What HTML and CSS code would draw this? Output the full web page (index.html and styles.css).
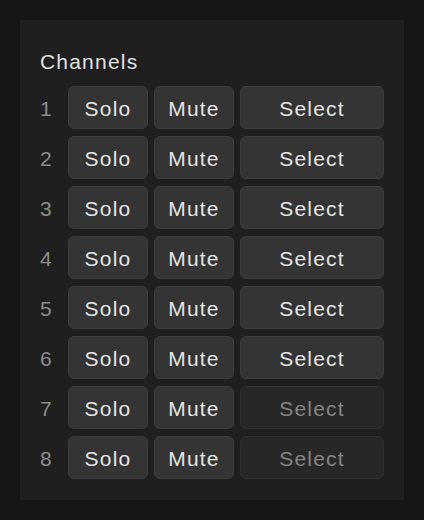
FILE: index.html
```html
<!DOCTYPE html>
<html lang="en">
<head>
<meta charset="utf-8">
<title>Channels</title>
<link rel="stylesheet" href="styles.css">
</head>
<body>
<section class="panel">
  <h2 class="title">Channels</h2>
  <div class="grid">
    <span class="num">1</span><button class="btn">Solo</button><button class="btn">Mute</button><button class="btn">Select</button>
    <span class="num">2</span><button class="btn">Solo</button><button class="btn">Mute</button><button class="btn">Select</button>
    <span class="num">3</span><button class="btn">Solo</button><button class="btn">Mute</button><button class="btn">Select</button>
    <span class="num">4</span><button class="btn">Solo</button><button class="btn">Mute</button><button class="btn">Select</button>
    <span class="num">5</span><button class="btn">Solo</button><button class="btn">Mute</button><button class="btn">Select</button>
    <span class="num">6</span><button class="btn">Solo</button><button class="btn">Mute</button><button class="btn">Select</button>
    <span class="num">7</span><button class="btn">Solo</button><button class="btn">Mute</button><button class="btn btn-disabled" disabled>Select</button>
    <span class="num">8</span><button class="btn">Solo</button><button class="btn">Mute</button><button class="btn btn-disabled" disabled>Select</button>
  </div>
</section>
</body>
</html>
```
FILE: styles.css
```css
html, body {
  margin: 0;
  padding: 0;
  background: #161616;
}
body {
  padding: 20px;
  font-family: "Liberation Sans", Arial, sans-serif;
}
.panel {
  width: 384px;
  box-sizing: border-box;
  background: #1f1f1f;
  padding: 29px 20px 21px;
}
.title {
  margin: 0 0 13px;
  padding-top: 1px;
  line-height: 23px;
  font-size: 21px;
  font-weight: normal;
  letter-spacing: 1.2px;
  color: #e2e2e2;
}
.grid {
  display: grid;
  grid-template-columns: 22px 80px 80px 1fr;
  grid-auto-rows: 43px;
  column-gap: 6px;
  row-gap: 7px;
  align-items: center;
}
.num {
  padding-top: 2px;
  font-size: 21px;
  color: #8c8c8c;
  letter-spacing: 1px;
}
.btn {
  height: 43px;
  box-sizing: border-box;
  margin: 0;
  padding: 2px 0 0;
  font-family: inherit;
  font-size: 21px;
  letter-spacing: 1.2px;
  color: #e4e4e4;
  background: #343434;
  border: 1px solid #3c3c3c;
  border-radius: 6px;
}
.btn-disabled {
  color: #848484;
  background: #272727;
  border-color: #2f2f2f;
}
```
